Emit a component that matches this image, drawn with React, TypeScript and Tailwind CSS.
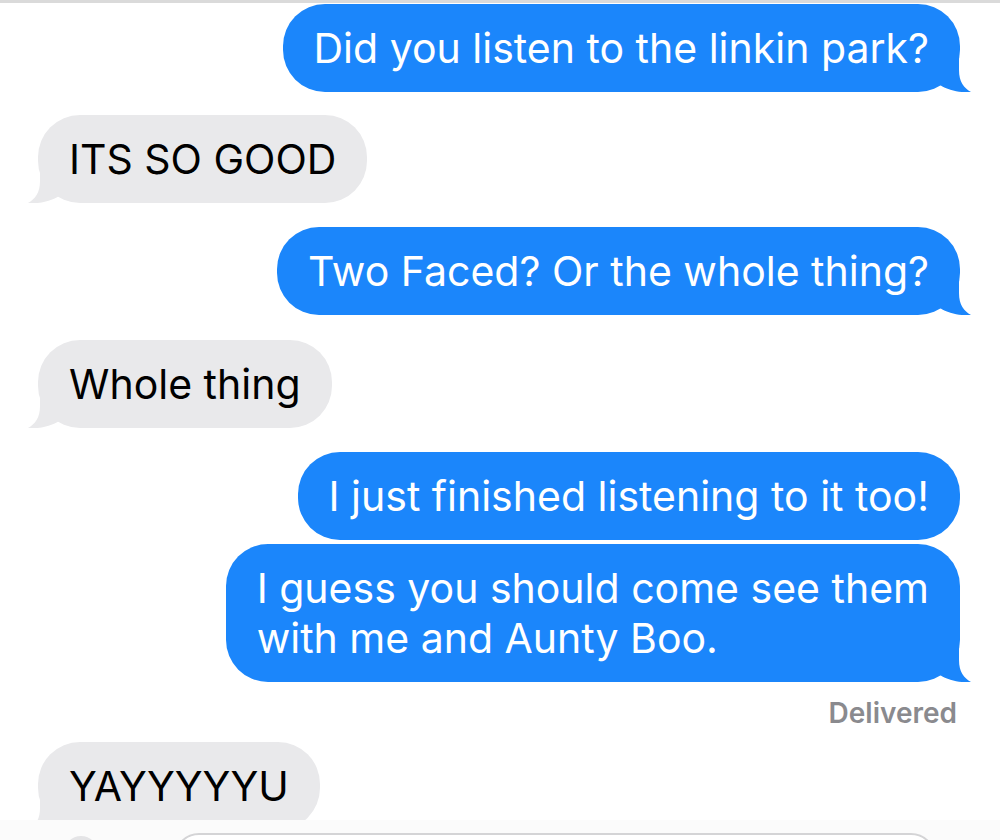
import React from "react";

type BubbleProps = {
  me?: boolean;
  tail?: boolean;
  className?: string;
  children: React.ReactNode;
};

const Tail: React.FC<{ me?: boolean }> = ({ me }) => (
  <svg
    width="54"
    height="40"
    viewBox="0 0 54 40"
    className={
      me
        ? "absolute bottom-0 right-[-13px] fill-[#1b86fb]"
        : "absolute bottom-0 left-[-12px] -scale-x-100 fill-[#e9e9eb]"
    }
  >
    <path d="M0 0 H40 V18 C40 30 45 36 52 40 C44 41 30 39 21 33 L0 33 Z" />
  </svg>
);

const Bubble: React.FC<BubbleProps> = ({ me, tail, className, children }) => (
  <div
    className={
      "relative rounded-[42px] px-[31px] py-[19px] text-[41px] leading-[50px] whitespace-nowrap " +
      (me ? "self-end bg-[#1b86fb] text-white " : "self-start bg-[#e9e9eb] text-black ") +
      (className ?? "")
    }
  >
    {tail && <Tail me={me} />}
    <span className="relative">{children}</span>
  </div>
);

export default function App() {
  return (
    <div className="flex h-[840px] w-[1000px] flex-col overflow-hidden bg-white font-['Inter','Liberation_Sans',sans-serif]">
      <div className="h-[3px] shrink-0 bg-[#dadada]" />

      <div className="flex flex-1 flex-col overflow-hidden pl-[38px] pr-[40px]">
        <Bubble me tail className="mt-[1px]">Did you listen to the linkin park?</Bubble>
        <Bubble tail className="mt-[23px]">ITS SO GOOD</Bubble>
        <Bubble me tail className="mt-[24px]">Two Faced? Or the whole thing?</Bubble>
        <Bubble tail className="mt-[25px]">Whole thing</Bubble>
        <Bubble me className="mt-[24px]">I just finished listening to it too!</Bubble>
        <Bubble me tail className="mt-[4px]">
          I guess you should come see them
          <br />
          with me and Aunty Boo.
        </Bubble>
        <p className="mt-[15px] mr-[3px] self-end text-[28px] leading-[32px] font-semibold text-[#8a8a8e]">
          Delivered
        </p>
        <Bubble tail className="mt-[13px] shrink-0">YAYYYYYU</Bubble>
      </div>

      <div className="flex h-[20px] shrink-0 items-start gap-[76px] overflow-hidden bg-[#fbfbfb] pl-[64px]">
        <div className="mt-[16px] h-[34px] w-[34px] shrink-0 rounded-full bg-[#e4e4e6]" />
        <div className="mt-[13px] h-[50px] w-[762px] shrink-0 rounded-[25px] border-2 border-[#d4d4d6] bg-white" />
      </div>
    </div>
  );
}
